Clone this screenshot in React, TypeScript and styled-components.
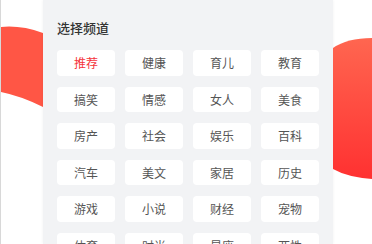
import React from 'react'
import styled, { createGlobalStyle } from 'styled-components'

const GlobalStyle = createGlobalStyle`
  html, body {
    margin: 0;
    padding: 0;
    background: #ffffff;
  }
  body {
    font-family: "Noto Sans CJK SC", "Noto Sans", sans-serif;
  }
`

const Page = styled.div`
  display: flex;
  width: 372px;
  height: 244px;
  overflow: hidden;
  border-left: 1px solid #d8d8d8;
  box-sizing: border-box;
`

const SideLeft = styled.div`
  flex: 0 0 42px;
  padding-top: 26px;
`

const SideRight = styled.div`
  flex: 0 0 39px;
  padding-top: 37px;
`

const Panel = styled.div`
  flex: 0 0 290px;
  background: #f2f3f5;
  padding: 18px 14px 0;
  box-sizing: border-box;
  box-shadow: 0 0 3px rgba(0, 0, 0, 0.06);
`

const Title = styled.div`
  font-size: 13px;
  line-height: 20px;
  font-weight: 500;
  color: #333333;
  margin-bottom: 12px;
`

const Grid = styled.div`
  display: grid;
  grid-template-columns: repeat(4, 58px);
  column-gap: 10px;
  row-gap: 11px;
`

const Channel = styled.div<{ $active?: boolean }>`
  height: 25.5px;
  background: #ffffff;
  border-radius: 4px;
  display: flex;
  align-items: center;
  justify-content: center;
  font-size: 12px;
  color: ${p => (p.$active ? '#f5343c' : '#555555')};
`

const channels = [
  '推荐', '健康', '育儿', '教育',
  '搞笑', '情感', '女人', '美食',
  '房产', '社会', '娱乐', '百科',
  '汽车', '美文', '家居', '历史',
  '游戏', '小说', '财经', '宠物',
  '体育', '时尚', '星座', '两性',
]

const LeftWave = () => (
  <svg width="42" height="82" viewBox="0 0 42 82">
    <path d="M0 1 Q20 -1 42 7 L42 81 Q20 70 0 66 Z" fill="#ff5645" />
  </svg>
)

const RightWave = () => (
  <svg width="39" height="144" viewBox="0 0 39 144">
    <defs>
      <linearGradient id="rw" x1="0" y1="0" x2="0" y2="1">
        <stop offset="0" stopColor="#ff6650" />
        <stop offset="1" stopColor="#ff3131" />
      </linearGradient>
    </defs>
    <path d="M0 11 Q14 1 39 1 L39 142 Q14 140 0 132 Z" fill="url(#rw)" />
  </svg>
)

const App = () => (
  <>
    <GlobalStyle />
    <Page>
      <SideLeft><LeftWave /></SideLeft>
      <Panel>
        <Title>选择频道</Title>
        <Grid>
          {channels.map((c, i) => (
            <Channel key={c} $active={i === 0}>{c}</Channel>
          ))}
        </Grid>
      </Panel>
      <SideRight><RightWave /></SideRight>
    </Page>
  </>
)

export default App
